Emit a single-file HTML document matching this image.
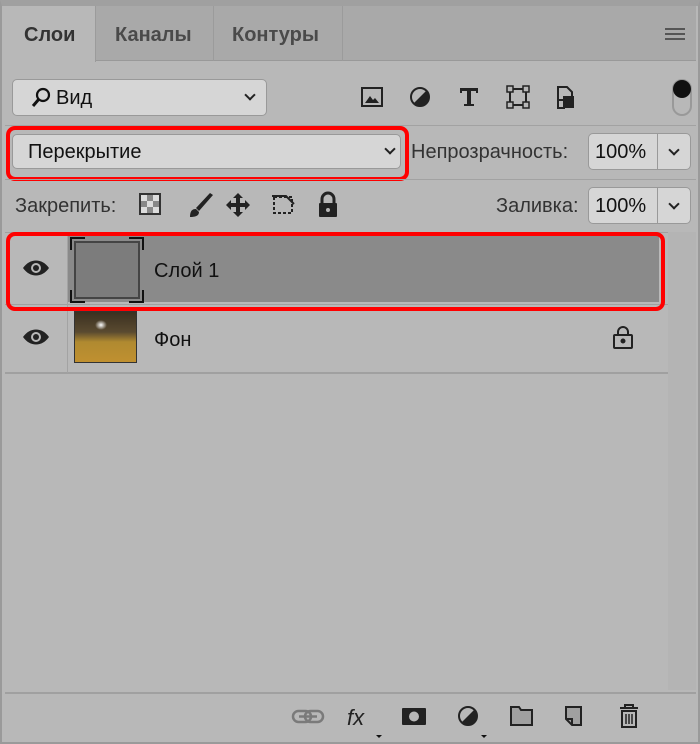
<!DOCTYPE html>
<html><head><meta charset="utf-8"><style>
*{margin:0;padding:0;box-sizing:border-box}
body{width:700px;height:744px;background:#a5a5a5;font-family:"Liberation Sans",sans-serif;position:relative;overflow:hidden;color:#222}
.a{position:absolute}
.box{position:absolute;background:#d6d6d6;border:1px solid #999;border-radius:5px}
.t{position:absolute;font-size:20px;color:#111}
.chev{position:absolute;width:8px;height:8px;border-right:2px solid #222;border-bottom:2px solid #222;transform:rotate(45deg)}
</style></head><body>
<div class="a" style="left:0;top:0;width:700px;height:744px;background:#b8b8b8;border:2px solid #9a9a9a;border-top:6px solid #a0a0a0"></div>
<div class="a" style="left:5px;top:6px;width:691px;height:55px;background:#a9a9a9;border-bottom:1px solid #999"></div>
<div class="a" style="left:5px;top:6px;width:91px;height:56px;background:#b8b8b8;border-right:1px solid #9b9b9b"></div>
<div class="a" style="left:213px;top:6px;width:1px;height:55px;background:#9b9b9b"></div>
<div class="a" style="left:342px;top:6px;width:1px;height:55px;background:#9b9b9b"></div>
<div class="t" style="left:24px;top:24px;font-weight:bold;color:#333">Слои</div>
<div class="t" style="left:115px;top:24px;font-weight:bold;color:#4a4a4a">Каналы</div>
<div class="t" style="left:232px;top:24px;font-weight:bold;color:#4a4a4a">Контуры</div>
<div class="a" style="left:665px;top:28px;width:20px;height:12px;border-top:2px solid #555;border-bottom:2px solid #555"></div>
<div class="a" style="left:665px;top:33px;width:20px;height:2px;background:#555"></div>
<div class="box" style="left:12px;top:79px;width:255px;height:37px"></div>
<svg class="a" style="left:30px;top:87px" width="24" height="22"><circle cx="13" cy="8" r="6" fill="none" stroke="#111" stroke-width="2.2"/><path d="M9 12l-6 7" stroke="#111" stroke-width="3"/></svg>
<div class="t" style="left:56px;top:87px">Вид</div>
<div class="chev" style="left:246px;top:91px"></div>
<svg class="a" style="left:360px;top:85px" width="240" height="26">
<rect x="2" y="3" width="20" height="18" fill="none" stroke="#222" stroke-width="2"/><path d="M5 18l5-7 3 4 2-2 4 5z" fill="#222"/>
<circle cx="60" cy="12" r="9" fill="none" stroke="#222" stroke-width="2"/><path d="M60 3a9 9 0 0 1 0 18z" fill="#222" transform="rotate(45 60 12)"/>
<path d="M100 3h18v5h-2v-2h-5v13h3v2h-10v-2h3v-13h-5v2h-2z" fill="#222"/>
<rect x="150" y="4" width="16" height="16" fill="none" stroke="#222" stroke-width="2"/><rect x="147" y="1" width="6" height="6" fill="#b8b8b8" stroke="#222" stroke-width="1.5"/><rect x="163" y="1" width="6" height="6" fill="#b8b8b8" stroke="#222" stroke-width="1.5"/><rect x="147" y="17" width="6" height="6" fill="#b8b8b8" stroke="#222" stroke-width="1.5"/><rect x="163" y="17" width="6" height="6" fill="#b8b8b8" stroke="#222" stroke-width="1.5"/>
<path d="M198 2h9l5 5v8h-14z" fill="none" stroke="#222" stroke-width="2"/><rect x="203" y="11" width="11" height="12" fill="#222"/><rect x="198" y="15" width="6" height="8" fill="none" stroke="#222" stroke-width="2"/>
</svg>
<div class="a" style="left:672px;top:79px;width:20px;height:37px;border:2px solid #999;border-radius:10px"></div>
<div class="a" style="left:673px;top:80px;width:18px;height:18px;border-radius:9px;background:#111"></div>
<div class="a" style="left:5px;top:125px;width:691px;height:1px;background:#a2a2a2"></div>
<div class="box" style="left:12px;top:134px;width:389px;height:35px"></div>
<div class="t" style="left:28px;top:141px">Перекрытие</div>
<div class="chev" style="left:386px;top:145px"></div>
<div class="a" style="left:6px;top:126px;width:403px;height:55px;border:4px solid #f00;border-radius:9px"></div>
<div class="t" style="left:411px;top:141px;color:#333">Непрозрачность:</div>
<div class="box" style="left:588px;top:133px;width:103px;height:37px"></div>
<div class="a" style="left:657px;top:134px;width:1px;height:35px;background:#999"></div>
<div class="t" style="left:595px;top:141px">100%</div>
<div class="chev" style="left:670px;top:146px"></div>
<div class="a" style="left:5px;top:179px;width:691px;height:1px;background:#a2a2a2"></div>
<div class="t" style="left:15px;top:195px;color:#333">Закрепить:</div>
<svg class="a" style="left:138px;top:191px" width="205" height="28">
<rect x="2" y="3" width="20" height="20" fill="#888" stroke="#333" stroke-width="2"/><rect x="3" y="4" width="6" height="6" fill="#ddd"/><rect x="15" y="4" width="6" height="6" fill="#ddd"/><rect x="9" y="10" width="6" height="6" fill="#ddd"/><rect x="3" y="16" width="6" height="6" fill="#ddd"/><rect x="15" y="16" width="6" height="6" fill="#ddd"/>
<path d="M72 2l-14 15 3 3 14-16z" fill="#222"/><path d="M52 26c0-6 2-8 6-8l3 3c0 4-4 5-9 5z" fill="#222"/>
<path d="M100 2l5 5h-3v5h5v-3l5 5-5 5v-3h-5v5h3l-5 5-5-5h3v-5h-5v3l-5-5 5-5v3h5v-5h-3z" fill="#222"/>
<rect x="136" y="6" width="18" height="16" fill="none" stroke="#222" stroke-width="2" stroke-dasharray="3 2"/><path d="M134 5h14l8 8" fill="none" stroke="#222" stroke-width="2"/>
<rect x="181" y="12" width="18" height="14" rx="1" fill="#222"/><path d="M184 12v-4a6 6 0 0 1 12 0v4" fill="none" stroke="#222" stroke-width="3"/><circle cx="190" cy="19" r="2" fill="#b8b8b8"/>
</svg>
<div class="t" style="left:496px;top:195px;color:#333">Заливка:</div>
<div class="box" style="left:588px;top:187px;width:103px;height:37px"></div>
<div class="a" style="left:657px;top:188px;width:1px;height:35px;background:#999"></div>
<div class="t" style="left:595px;top:195px">100%</div>
<div class="chev" style="left:670px;top:200px"></div>
<div class="a" style="left:5px;top:232px;width:663px;height:458px;background:#b8b8b8"></div>
<div class="a" style="left:668px;top:232px;width:28px;height:458px;background:#b4b4b4"></div>
<div class="a" style="left:5px;top:232px;width:663px;height:1px;background:#a0a0a0"></div>
<div class="a" style="left:67px;top:235px;width:592px;height:67px;background:#8a8a8a"></div>
<div class="a" style="left:5px;top:304px;width:663px;height:1px;background:#a0a0a0"></div>
<div class="a" style="left:5px;top:372px;width:663px;height:2px;background:#a0a0a0"></div>
<div class="a" style="left:67px;top:235px;width:1px;height:138px;background:#a3a3a3"></div>
<svg class="a" style="left:22px;top:258px" width="28" height="100"><path d="M1 10c7-10 19-10 26 0c-7 10-19 10-26 0z" fill="#222"/><circle cx="14" cy="10" r="5" fill="#b8b8b8"/><circle cx="14" cy="10" r="3" fill="#222"/>
<path d="M1 79c7-10 19-10 26 0c-7 10-19 10-26 0z" fill="#222"/><circle cx="14" cy="79" r="5" fill="#b8b8b8"/><circle cx="14" cy="79" r="3" fill="#222"/></svg>
<div class="a" style="left:74px;top:241px;width:66px;height:58px;background:#7c7c7c;border:2px solid #444"></div>
<svg class="a" style="left:70px;top:237px" width="74" height="66" fill="none" stroke="#111" stroke-width="2"><path d="M1 13V1h14M59 1h14v12M73 53v12H59M15 65H1V53"/></svg>
<div class="t" style="left:154px;top:260px">Слой 1</div>
<div class="a" style="left:74px;top:311px;width:63px;height:52px;background:linear-gradient(#3a3020,#5a4a30 40%,#b08a30 60%,#c09030);border:1px solid #333"></div>
<div class="a" style="left:95px;top:320px;width:12px;height:10px;background:radial-gradient(#fff,transparent 70%)"></div>
<div class="t" style="left:154px;top:329px">Фон</div>
<svg class="a" style="left:612px;top:326px" width="22" height="24" fill="none" stroke="#222" stroke-width="2"><rect x="2" y="9" width="18" height="13" rx="1"/><path d="M6 9V6a5 5 0 0 1 10 0v3"/><circle cx="11" cy="15" r="1.5" fill="#222"/></svg>
<div class="a" style="left:6px;top:232px;width:659px;height:79px;border:4px solid #f00;border-radius:9px"></div>
<div class="a" style="left:5px;top:692px;width:691px;height:2px;background:#a0a0a0"></div>
<svg class="a" style="left:285px;top:700px" width="370" height="40">
<g fill="none" stroke="#7a7a7a" stroke-width="2.5"><rect x="8" y="11" width="18" height="11" rx="5.5"/><rect x="20" y="11" width="18" height="11" rx="5.5"/></g><path d="M14 16.5h18" stroke="#7a7a7a" stroke-width="2.5"/>
<text x="62" y="25" font-family="Liberation Sans" font-style="italic" font-size="22" fill="#222">fx</text><path d="M91 35h6l-3 3z" fill="#111"/>
<rect x="117" y="8" width="24" height="17" rx="1" fill="#222"/><circle cx="129" cy="16.5" r="5" fill="#b8b8b8"/>
<circle cx="183" cy="16" r="9" fill="none" stroke="#222" stroke-width="2"/><path d="M183 7a9 9 0 0 1 0 18z" fill="#222" transform="rotate(45 183 16)"/><path d="M196 35h6l-3 3z" fill="#111"/>
<path d="M226 7h8l2 3h11v15h-21z" fill="#a0a0a0" stroke="#222" stroke-width="2"/>
<path d="M281 7h15v18h-9l-6-6z" fill="#a0a0a0" stroke="#222" stroke-width="2"/><path d="M281 19h6v6" fill="none" stroke="#222" stroke-width="2"/>
<path d="M335 8h18M340 8v-3h8v3M337 11h14v16h-14z" fill="none" stroke="#222" stroke-width="2"/><path d="M341 14v10M344 14v10M347 14v10" stroke="#222" stroke-width="1.5"/>
</svg>
</body></html>
